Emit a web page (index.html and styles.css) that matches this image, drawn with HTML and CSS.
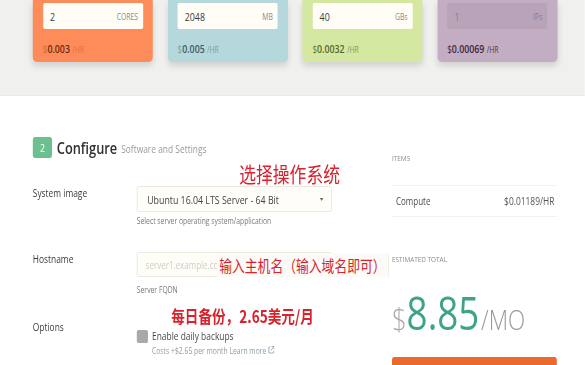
FILE: index.html
```html
<!DOCTYPE html>
<html>
<head>
<meta charset="utf-8">
<link rel="stylesheet" href="styles.css">
</head>
<body>
<div class="frame">
<div class="page">
  <div class="top">
    <div class="cards">
      <div class="card card-cpu">
        <div class="field"><span class="val">2</span><span class="unit">CORES</span></div>
        <div class="price"><span class="cur">$</span><b>0.003</b><span class="per">/HR</span></div>
      </div>
      <div class="card card-ram">
        <div class="field"><span class="val">2048</span><span class="unit">MB</span></div>
        <div class="price"><span class="cur">$</span><b>0.005</b><span class="per">/HR</span></div>
      </div>
      <div class="card card-disk">
        <div class="field"><span class="val">40</span><span class="unit">GBs</span></div>
        <div class="price"><span class="cur">$</span><b>0.0032</b><span class="per">/HR</span></div>
      </div>
      <div class="card card-ip">
        <div class="field field-dis"><span class="val">1</span><span class="unit">IPs</span></div>
        <div class="price"><span class="cur">$</span><b>0.00069</b><span class="per">/HR</span></div>
      </div>
    </div>
  </div>

  <div class="config">
    <div class="form">
      <div class="head">
        <span class="badge">2</span>
        <span class="title">Configure</span>
        <span class="sub">Software and Settings</span>
      </div>

      <div class="row row-os">
        <div class="label">System image</div>
        <div class="control">
          <div class="select">Ubuntu 16.04 LTS Server - 64 Bit<span class="caret"></span></div>
          <div class="help help-os">Select server operating system/application</div>
        </div>
      </div>

      <div class="row row-host">
        <div class="label">Hostname</div>
        <div class="control">
          <div class="input">server1.example.com</div>
          <div class="help help-host">Server FQDN</div>
        </div>
      </div>

      <div class="row row-opt">
        <div class="label">Options</div>
        <div class="control">
          <div class="check"><span class="box"></span><span>Enable daily backups</span></div>
          <div class="cost">Costs +$2.65 per month <span class="learn">Learn more <svg width="8" height="8" viewBox="0 0 8 8"><path d="M3 1H1v6h6V5" fill="none" stroke="#9ab" stroke-width="1"/><path d="M4.5 0.5h3v3M7.5 0.5L3.5 4.5" fill="none" stroke="#9ab" stroke-width="1"/></svg></span></div>
        </div>
      </div>
    </div>

    <aside class="summary">
      <div class="cap">ITEMS</div>
      <div class="item"><span>Compute</span><span class="item-price">$0.01189/HR</span></div>
      <div class="cap cap-total">ESTIMATED TOTAL</div>
      <div class="total"><span class="t-cur">$</span><span class="t-num">8.85</span><span class="t-per">/MO</span></div>
      <div class="deploy"></div>
    </aside>

    <div class="note note-os">选择操作系统</div>
    <div class="note note-host">输入主机名（输入域名即可）</div>
    <div class="note note-bak">每日备份，2.65美元/月</div>
  </div>
</div>
</div>
</body>
</html>
```

FILE: styles.css
```css
html, body {
  margin: 0;
  padding: 0;
  background: #ffffff;
  overflow: hidden;
}

.frame {
  width: 585px;
  height: 365px;
  overflow: hidden;
}

.page {
  width: 731px;
  height: 365px;
  overflow: hidden;
  transform: scaleX(0.8);
  transform-origin: 0 0;
  font-family: "Open Sans", "Noto Sans", sans-serif;
  color: #444;
}

/* ---------- top section ---------- */
.top {
  height: 95px;
  background: #f0f0ee;
  border-bottom: 1px solid #e9e9e7;
}

.cards {
  display: flex;
  gap: 18.5px;
  padding-left: 41px;
}

.card {
  width: 150px;
  box-sizing: border-box;
  padding: 3px 12.5px 7px;
  border-radius: 0 0 5px 5px;
  box-shadow: 0 4px 7px rgba(0, 0, 0, 0.13);
}

.card-cpu { background: #fe8c5a; }
.card-ram { background: #b5d8dc; }
.card-disk { background: #d5e8a1; }
.card-ip { background: #c3adc3; }

.field {
  height: 26px;
  display: flex;
  align-items: center;
  justify-content: space-between;
  padding: 0 6px 0 9px;
  background: #fffdf6;
  border-radius: 2px;
}

.field-dis { background: #b9a3b9; }

.val {
  font-size: 11px;
  color: #3a3a3a;
}

.unit {
  font-size: 8.5px;
  color: #8a8a8a;
}

.field-dis .val, .field-dis .unit { color: #8e778e; }

.price {
  margin-top: 14px;
  height: 12px;
  line-height: 12px;
  font-size: 11px;
  display: flex;
  align-items: baseline;
}

.price b { font-weight: 600; }
.price .cur { font-size: 10px; }
.price .per { font-size: 8.5px; margin-left: 3px; }

.card-cpu .cur { color: #d4663a; }
.card-cpu b { color: #6c2a10; }
.card-cpu .per { color: #e46e40; }

.card-ram .cur { color: #7f9fa3; }
.card-ram b { color: #3f5c60; }
.card-ram .per { color: #7c9ca0; }

.card-disk .cur { color: #6c7f3c; }
.card-disk b { color: #55652c; }
.card-disk .per { color: #85985a; }

.card-ip .cur { color: #3e2a3e; }
.card-ip b { color: #3a263a; }
.card-ip .per { color: #4c394c; }

/* ---------- config section ---------- */
.config {
  position: relative;
  display: flex;
  padding-left: 41px;
}

.form {
  width: 374px;
  padding-top: 41px;
}

.head {
  display: flex;
  align-items: center;
  height: 21px;
}

.badge {
  width: 24px;
  height: 21px;
  border-radius: 3px;
  background: #6cc08f;
  color: #ffffff;
  font-size: 11px;
  display: flex;
  align-items: center;
  justify-content: center;
}

.title {
  margin-left: 6px;
  font-size: 16px;
  font-weight: 600;
  color: #2f2f2f;
}

.sub {
  margin-left: 5px;
  font-size: 10.5px;
  color: #9a9a9a;
  padding-top: 3px;
}

.row {
  display: grid;
  grid-template-columns: 130px 244px;
}

.label {
  font-size: 10.5px;
  line-height: 14px;
  color: #3c3c3c;
}

.row-os { margin-top: 28px; }
.row-host { margin-top: 24px; }
.row-opt { margin-top: 23px; }

.select {
  height: 26px;
  box-sizing: border-box;
  border: 1px solid #ebe6dc;
  background: #fffdf8;
  border-radius: 2px;
  display: flex;
  align-items: center;
  justify-content: space-between;
  padding: 0 10px 0 12px;
  font-size: 11px;
  color: #444;
}

.caret {
  width: 0;
  height: 0;
  border-left: 2px solid transparent;
  border-right: 2px solid transparent;
  border-top: 3px solid #666;
}

.input {
  height: 25px;
  box-sizing: border-box;
  border: 1px solid #ebe6dc;
  background: #fffdf8;
  border-radius: 2px;
  display: flex;
  align-items: center;
  padding: 0 10px;
  font-size: 10px;
  color: #d0cdc6;
}

.help {
  font-size: 8.5px;
  line-height: 14px;
  color: #7a7a7a;
}

.help-os { margin-top: 2px; }
.help-host { margin-top: 6px; }

.check {
  margin-top: 9px;
  height: 14px;
  display: flex;
  align-items: center;
  gap: 5px;
  font-size: 10.5px;
  color: #4a4a4a;
}

.box {
  width: 14px;
  height: 13px;
  border-radius: 2px;
  background: #a9a9a9;
}

.cost {
  margin-top: 2px;
  margin-left: 19px;
  line-height: 12px;
  font-size: 8.5px;
  color: #9a9a9a;
}

.learn { color: #8aa0a8; }

/* ---------- summary ---------- */
.summary {
  width: 206px;
  margin-left: 75px;
  padding-top: 56px;
}

.cap {
  font-size: 8px;
  line-height: 12px;
  color: #8a8a8a;
}

.item {
  margin-top: 21px;
  height: 32px;
  box-sizing: border-box;
  border-top: 1px solid #f1f1f1;
  border-bottom: 1px solid #f1f1f1;
  display: flex;
  align-items: center;
  justify-content: space-between;
  padding: 0 3px 0 5px;
  font-size: 10px;
  color: #4a4a4a;
}

.item-price {
  font-size: 10.5px;
  color: #555;
}

.cap-total { margin-top: 36px; }

.total {
  margin-top: 24px;
  height: 46px;
  line-height: 46px;
  white-space: nowrap;
}

.t-cur {
  font-size: 32px;
  color: #a8a8a8;
  font-weight: 300;
}

.t-num {
  font-size: 46px;
  color: #3ea489;
}

.t-per {
  font-size: 28px;
  color: #9a9a9a;
  font-weight: 300;
  margin-left: 2px;
}

.deploy {
  margin-top: 22px;
  height: 40px;
  background: #ea692c;
  border-radius: 3px;
}

/* ---------- annotations (overlay) ---------- */
.note {
  position: absolute;
  font-family: "Noto Sans CJK SC", sans-serif;
  color: #d8222d;
  white-space: nowrap;
}

.note-os {
  left: 299px;
  top: 64px;
  font-size: 21px;
  line-height: 26px;
}

.note-host {
  left: 271px;
  top: 157px;
  height: 24px;
  line-height: 24px;
  font-size: 16px;
  padding: 0 3px;
  background: #fcfbf7;
  border-right: 1px solid #eeebe4;
}

.note-bak {
  left: 214px;
  top: 211px;
  font-size: 17px;
  line-height: 18px;
  font-weight: 700;
}
```
